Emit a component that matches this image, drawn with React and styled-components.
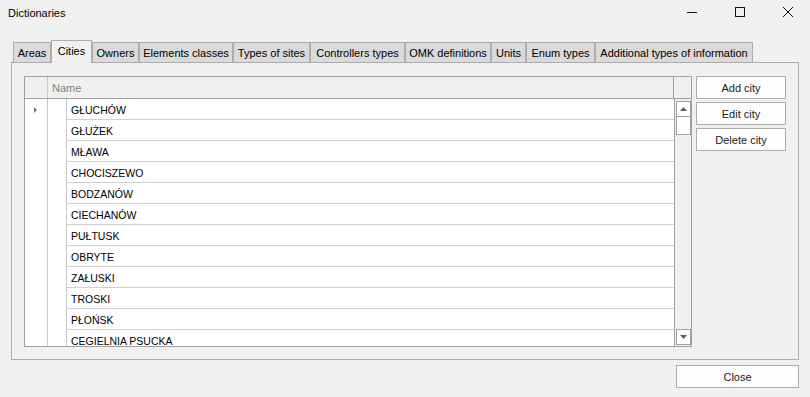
import React from "react";
import styled, { createGlobalStyle } from "styled-components";

const GlobalStyle = createGlobalStyle`
  body {
    margin: 0;
    background: #f0f0f0;
    font-family: "Liberation Sans", Arial, sans-serif;
    font-size: 11px;
    color: #000;
  }
`;

const tabs = [
  { label: "Areas", width: 38 },
  { label: "Cities", width: 41, active: true },
  { label: "Owners", width: 47 },
  { label: "Elements classes", width: 94 },
  { label: "Types of sites", width: 77 },
  { label: "Controllers types", width: 95 },
  { label: "OMK definitions", width: 86 },
  { label: "Units", width: 35 },
  { label: "Enum types", width: 69 },
  { label: "Additional types of information", width: 158 },
];

const cities = [
  "GŁUCHÓW",
  "GŁUŻEK",
  "MŁAWA",
  "CHOCISZEWO",
  "BODZANÓW",
  "CIECHANÓW",
  "PUŁTUSK",
  "OBRYTE",
  "ZAŁUSKI",
  "TROSKI",
  "PŁOŃSK",
  "CEGIELNIA PSUCKA",
];

export default function App() {
  return (
    <>
      <GlobalStyle />
      <Window>
        <TitleBar>
          <Title>Dictionaries</Title>
          <Controls>
            <CtrlButton>
              <svg width="12" height="12" viewBox="0 0 12 12">
                <path d="M1 6.5h10" stroke="#111" strokeWidth="1" />
              </svg>
            </CtrlButton>
            <CtrlButton>
              <svg width="12" height="12" viewBox="0 0 12 12">
                <rect x="1.5" y="1.5" width="9" height="9" fill="none" stroke="#111" strokeWidth="1" />
              </svg>
            </CtrlButton>
            <CtrlButton>
              <svg width="12" height="12" viewBox="0 0 12 12">
                <path d="M1 1l10 10M11 1L1 11" stroke="#111" strokeWidth="1" />
              </svg>
            </CtrlButton>
          </Controls>
        </TitleBar>

        <Body>
          <TabStrip>
            {tabs.map((t) => (
              <Tab key={t.label} $width={t.width} $active={t.active}>
                {t.label}
              </Tab>
            ))}
          </TabStrip>
          <Panel>
            <Grid>
              <HeaderRow>
                <CornerCell />
                <NameHeader>Name</NameHeader>
                <ScrollHeader />
              </HeaderRow>
              <GridBody>
                <Rows>
                  {cities.map((c, i) => (
                    <Row key={c}>
                      <Indicator>{i === 0 && <Arrow />}</Indicator>
                      <IndentCell />
                      <NameCell>{c}</NameCell>
                    </Row>
                  ))}
                </Rows>
                <ScrollBar>
                  <ScrollBtn>
                    <svg width="7" height="4" viewBox="0 0 7 4">
                      <path d="M0 4L3.5 0L7 4z" fill="#606060" />
                    </svg>
                  </ScrollBtn>
                  <Thumb />
                  <ScrollSpacer />
                  <ScrollBtn>
                    <svg width="7" height="4" viewBox="0 0 7 4">
                      <path d="M0 0L3.5 4L7 0z" fill="#606060" />
                    </svg>
                  </ScrollBtn>
                </ScrollBar>
              </GridBody>
            </Grid>
            <ButtonColumn>
              <Button>Add city</Button>
              <Button>Edit city</Button>
              <Button>Delete city</Button>
            </ButtonColumn>
          </Panel>
          <Footer>
            <CloseButton>Close</CloseButton>
          </Footer>
        </Body>
      </Window>
    </>
  );
}

const Window = styled.div`
  width: 810px;
  height: 397px;
  overflow: hidden;
  display: flex;
  flex-direction: column;
  background: #f0f0f0;
`;

const TitleBar = styled.div`
  height: 28px;
  display: flex;
  align-items: center;
  padding-left: 8px;
`;

const Title = styled.div`
  flex: 1;
  font-size: 11px;
  padding-bottom: 2px;
`;

const Controls = styled.div`
  display: flex;
  margin-right: -2px;
  height: 28px;
`;

const CtrlButton = styled.div`
  width: 48px;
  display: flex;
  align-items: center;
  justify-content: center;
  padding-bottom: 4px;
`;

const Body = styled.div`
  padding: 12px 11px 0 11px;
  display: flex;
  flex-direction: column;
`;

const TabStrip = styled.div`
  display: flex;
  align-items: flex-end;
  height: 23px;
  padding-left: 2px;
  position: relative;
  z-index: 1;
  margin-bottom: -1px;
`;

const Tab = styled.div`
  box-sizing: border-box;
  width: ${(p) => p.$width}px;
  height: ${(p) => (p.$active ? 23 : 21)}px;
  border: 1px solid #acacac;
  border-bottom: ${(p) => (p.$active ? "none" : "1px solid #acacac")};
  background: ${(p) => (p.$active ? "#f0f0f0" : "#dadada")};
  display: flex;
  align-items: center;
  justify-content: center;
  padding-bottom: ${(p) => (p.$active ? 3 : 0)}px;
  white-space: nowrap;
  color: #000;
`;

const Panel = styled.div`
  box-sizing: border-box;
  height: 298px;
  border: 1px solid #acacac;
  padding: 13px 12px 12px 12px;
  display: flex;
  gap: 4px;
`;

const Grid = styled.div`
  flex: 1;
  display: flex;
  flex-direction: column;
  border: 1px solid #a0a0a0;
  background: #fff;
  overflow: hidden;
`;

const HeaderRow = styled.div`
  display: flex;
  height: 21px;
  background: #f0f0f0;
  border-bottom: 1px solid #a0a0a0;
`;

const CornerCell = styled.div`
  width: 22px;
  border-right: 1px solid #c8c8c8;
`;

const NameHeader = styled.div`
  flex: 1;
  color: #808080;
  padding-left: 4px;
  display: flex;
  align-items: center;
`;

const ScrollHeader = styled.div`
  width: 17px;
  border-left: 1px solid #a0a0a0;
`;

const GridBody = styled.div`
  flex: 1;
  display: flex;
  min-height: 0;
`;

const Rows = styled.div`
  flex: 1;
  display: flex;
  flex-direction: column;
  overflow: hidden;
`;

const Row = styled.div`
  display: flex;
  height: 21px;
  flex-shrink: 0;
`;

const Indicator = styled.div`
  width: 22px;
  border-right: 1px solid #c8c8c8;
  display: flex;
  align-items: center;
  justify-content: center;
`;

const Arrow = styled.span`
  width: 0;
  height: 0;
  border-top: 3px solid transparent;
  border-bottom: 3px solid transparent;
  border-left: 3px solid #707070;
  margin-right: 2px;
`;

const IndentCell = styled.div`
  width: 18px;
  border-right: 1px solid #c8c8c8;
`;

const NameCell = styled.div`
  flex: 1;
  border-bottom: 1px solid #d0d0d0;
  padding-left: 4px;
  padding-top: 2px;
  display: flex;
  align-items: center;
  font-size: 10.5px;
  color: #000;
`;

const ScrollBar = styled.div`
  width: 17px;
  border-left: 1px solid #a0a0a0;
  background: #f0f0f0;
  display: flex;
  flex-direction: column;
  align-items: center;
  padding: 2px 0 1px;
  box-sizing: border-box;
`;

const ScrollBtn = styled.div`
  box-sizing: border-box;
  width: 15px;
  height: 16px;
  border: 1px solid #a0a0a0;
  background: #fff;
  display: flex;
  align-items: center;
  justify-content: center;
`;

const Thumb = styled.div`
  box-sizing: border-box;
  width: 15px;
  height: 19px;
  margin-top: -1px;
  border: 1px solid #a0a0a0;
  background: #fff;
`;

const ScrollSpacer = styled.div`
  flex: 1;
`;

const ButtonColumn = styled.div`
  width: 90px;
  display: flex;
  flex-direction: column;
  gap: 3px;
`;

const Button = styled.div`
  box-sizing: border-box;
  height: 23px;
  border: 1px solid #adadad;
  background: #fdfdfd;
  display: flex;
  align-items: center;
  justify-content: center;
  color: #1a1a1a;
`;

const Footer = styled.div`
  display: flex;
  justify-content: flex-end;
  margin-top: 5px;
`;

const CloseButton = styled(Button)`
  width: 123px;
`;
